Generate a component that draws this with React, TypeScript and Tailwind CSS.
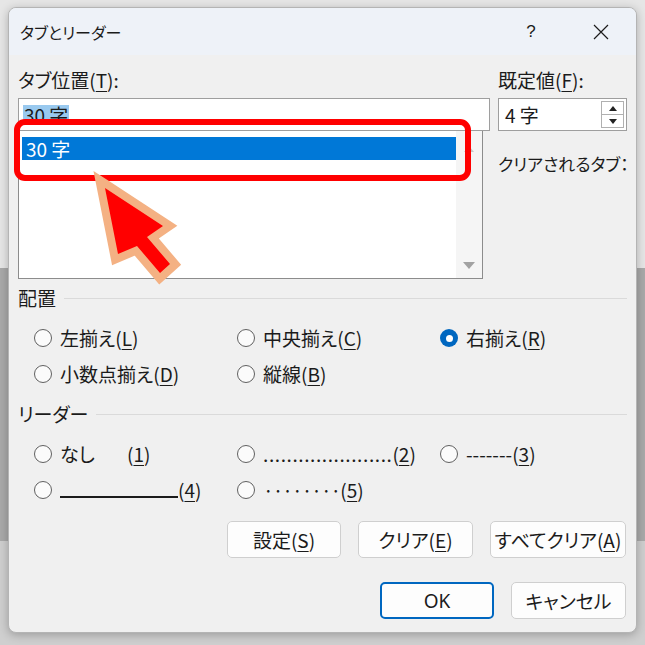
import React from 'react';

const font = "[font-family:'Noto_Sans_CJK_JP','Noto_Sans',sans-serif] [font-feature-settings:'palt']";

const Radio: React.FC<{ checked?: boolean }> = ({ checked }) => (
  <span
    className={
      checked
        ? 'flex h-[18px] w-[18px] shrink-0 items-center justify-center rounded-full bg-[#0067c0]'
        : 'h-[18px] w-[18px] shrink-0 rounded-full border border-[#606060] bg-[#fbfbfb]'
    }
  >
    {checked && <span className="h-[7px] w-[7px] rounded-full bg-white" />}
  </span>
);

const Mn: React.FC<{ c: string }> = ({ c }) => (
  <>
    (<u className="underline-offset-[3px] decoration-1">{c}</u>)
  </>
);

const Option: React.FC<{ checked?: boolean; children: React.ReactNode }> = ({ checked, children }) => (
  <div className="flex h-[36px] items-center gap-[8px]">
    <Radio checked={checked} />
    <span className="whitespace-nowrap">{children}</span>
  </div>
);

const GroupLabel: React.FC<{ label: string }> = ({ label }) => (
  <div className="flex h-[22px] items-center gap-[8px]">
    <span className="whitespace-nowrap">{label}</span>
    <div className="h-px flex-1 bg-[#dadada]" />
  </div>
);

const Btn: React.FC<{ w: string; primary?: boolean; children: React.ReactNode }> = ({ w, primary, children }) => (
  <div
    className={
      (primary ? 'border-2 border-[#0067c0] ' : 'border border-[#cfcfcf] ') +
      w +
      ' flex h-[37px] items-center justify-center rounded-[5px] bg-[#fdfdfd] whitespace-nowrap'
    }
  >
    {children}
  </div>
);

export default function App() {
  return (
    <div
      className={
        font +
        ' relative h-[645px] w-[645px] overflow-hidden bg-[linear-gradient(to_bottom,#e6e6e6_0px,#e6e6e6_268px,#a9a9a9_268px,#a9a9a9_541px,#cfcfcf_541px)] pl-[8px] pt-[7px] text-[19px] leading-[22px] text-[#1b1b1b]'
      }
    >
      {/* dialog */}
      <div className="flex h-[626px] w-[629px] flex-col overflow-hidden rounded-[8px] border border-[#b4b4b4] bg-[#f0f0f0] shadow-[0_2px_10px_rgba(0,0,0,0.25)]">
        {/* title bar */}
        <div className="flex h-[47px] shrink-0 items-center bg-[#eef2f8] pl-[11px] text-[16px]">
          <span className="flex-1">タブとリーダー</span>
          <span className="w-[30px] text-center text-[17px] [font-family:'Liberation_Sans',sans-serif]">?</span>
          <span className="ml-[46px] mr-[26px] flex w-[18px] items-center justify-center">
            <svg width="16" height="16" viewBox="0 0 16 16" fill="none" stroke="#1b1b1b" strokeWidth="1.2">
              <path d="M1 1 L15 15 M15 1 L1 15" />
            </svg>
          </span>
        </div>

        <div className="flex flex-1 flex-col px-[9px]">
          {/* top area */}
          <div className="mt-[14px] flex gap-[8px]">
            <div className="w-[472px] shrink-0">
              <div className="h-[22px] whitespace-nowrap">
                タブ位置<Mn c="T" />:
              </div>
              <div className="mt-[7px] flex h-[33px] items-center border border-[#9e9e9e] bg-white pl-[4px]">
                <span className="bg-[#99c9ef] px-[1px] leading-[20px]">30 字</span>
              </div>
              <div className="flex h-[148px] w-[465px] border border-t-0 border-[#8c8c8c] bg-white">
                <div className="flex-1 pl-[3px] pt-[6px]">
                  <div className="flex h-[23px] items-center bg-[#0078d7] pl-[4px] text-white">30 字</div>
                </div>
                <div className="flex w-[26px] flex-col items-center justify-between bg-[#f5f5f5] pb-[8px] pt-[14px]">
                  <svg width="12" height="8" viewBox="0 0 12 8">
                    <path d="M1 7 L6 1 L11 7 Z" fill="#c8c8c8" />
                  </svg>
                  <svg width="14" height="9" viewBox="0 0 14 9">
                    <path d="M1 1 L13 1 L7 8 Z" fill="#a2a2a2" />
                  </svg>
                </div>
              </div>
            </div>
            <div className="flex-1">
              <div className="h-[22px] whitespace-nowrap">
                既定値<Mn c="F" />:
              </div>
              <div className="mt-[7px] flex h-[33px] w-[129px] items-center border border-[#9e9e9e] bg-white pl-[6px] pr-[2px]">
                <span className="flex-1">4 字</span>
                <div className="flex h-[27px] w-[23px] flex-col border border-[#b0b0b0]">
                  <div className="flex flex-1 items-center justify-center border-b border-[#b0b0b0]">
                    <svg width="8" height="5" viewBox="0 0 8 5">
                      <path d="M0 5 L4 0 L8 5 Z" fill="#222" />
                    </svg>
                  </div>
                  <div className="flex flex-1 items-center justify-center">
                    <svg width="8" height="5" viewBox="0 0 8 5">
                      <path d="M0 0 L8 0 L4 5 Z" fill="#222" />
                    </svg>
                  </div>
                </div>
              </div>
              <div className="mt-[22px] whitespace-nowrap text-[17px]">クリアされるタブ：</div>
            </div>
          </div>

          {/* alignment */}
          <div className="mt-[8px]">
            <GroupLabel label="配置" />
            <div className="mt-[11px] grid grid-cols-[203px_203px_1fr] pl-[16px]">
              <Option>左揃え<Mn c="L" /></Option>
              <Option>中央揃え<Mn c="C" /></Option>
              <Option checked>右揃え<Mn c="R" /></Option>
              <Option>小数点揃え<Mn c="D" /></Option>
              <Option>縦線<Mn c="B" /></Option>
            </div>
          </div>

          {/* leader */}
          <div className="mt-[11px]">
            <GroupLabel label="リーダー" />
            <div className="mt-[11px] grid grid-cols-[203px_203px_1fr] pl-[16px]">
              <Option>
                <span className="inline-block w-[67px]">なし</span>
                <Mn c="1" />
              </Option>
              <Option>
                <span className="tracking-[0.6px]">......................</span>
                <Mn c="2" />
              </Option>
              <Option>
                -------<Mn c="3" />
              </Option>
              <Option>
                <span className="inline-block h-[16px] w-[118px] border-b-[2px] border-[#1b1b1b] align-baseline" />
                <Mn c="4" />
              </Option>
              <Option>
                <span className="tracking-[-1px]">········</span>
                <Mn c="5" />
              </Option>
            </div>
          </div>

          {/* buttons */}
          <div className="mt-[13px] flex justify-end gap-[17px] pr-[1px]">
            <Btn w="w-[114px]">
              設定<Mn c="S" />
            </Btn>
            <Btn w="w-[115px]">
              クリア<Mn c="E" />
            </Btn>
            <Btn w="w-[136px]">
              すべてクリア<Mn c="A" />
            </Btn>
          </div>
          <div className="mt-[24px] flex justify-end gap-[17px] pr-[1px]">
            <Btn w="w-[114px]" primary>
              <span className="[font-family:'Noto_Sans',sans-serif]">OK</span>
            </Btn>
            <Btn w="w-[115px]">キャンセル</Btn>
          </div>
        </div>
      </div>

      {/* annotation: red box */}
      <div className="absolute left-[14px] top-[119px] h-[62px] w-[457px] rounded-[11px] border-[6px] border-[#ff0000]" />

      {/* annotation: arrow */}
      <svg className="absolute left-0 top-0" width="645" height="645" viewBox="0 0 645 645">
        <polygon
          points="105,188 163,226 147,237 170,264 160,273 137,246 118,254"
          fill="#ff0000"
          stroke="#f4b183"
          strokeWidth="16"
          strokeLinejoin="miter"
          strokeMiterlimit="4"
          paintOrder="stroke"
        />
      </svg>
    </div>
  );
}
